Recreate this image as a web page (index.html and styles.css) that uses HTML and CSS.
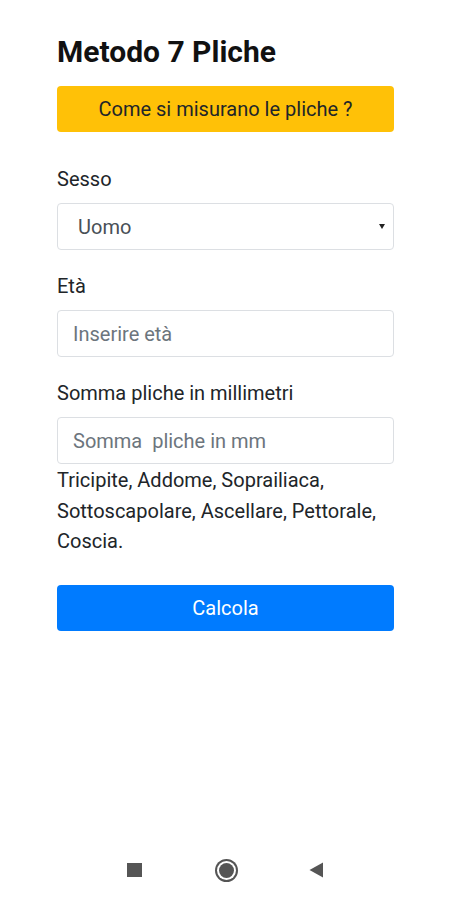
FILE: index.html
```html
<!DOCTYPE html>
<html lang="it">
  <head>
    <meta charset="UTF-8" />
    <meta name="viewport" content="width=device-width, initial-scale=1.0" />
    <title>Metodo 7 Pliche</title>
    <link rel="stylesheet" href="styles.css">
  </head>
  <body>
    <div class="screen">
      <div class="container">
        <h1 class="title">Metodo 7 Pliche</h1>
        <button class="btn btn-warning">Come si misurano le pliche ?</button>

        <div class="group">
          <label class="label" for="sesso">Sesso</label>
          <div class="select-wrap">
            <select class="field select" id="sesso">
              <option>Uomo</option>
              <option>Donna</option>
            </select>
            <span class="caret"></span>
          </div>
        </div>

        <div class="group">
          <label class="label" for="eta">Età</label>
          <input class="field" id="eta" type="text" placeholder="Inserire età">
        </div>

        <div class="group">
          <label class="label" for="somma">Somma pliche in millimetri</label>
          <input class="field" id="somma" type="text" placeholder="Somma  pliche in mm">
          <p class="hint">Tricipite, Addome, Soprailiaca, Sottoscapolare, Ascellare, Pettorale, Coscia.</p>
        </div>

        <button class="btn btn-primary">Calcola</button>
      </div>

      <div class="navbar">
        <span class="nav-square"></span>
        <span class="nav-circle"></span>
        <svg class="nav-back" width="14" height="16" viewBox="0 0 14 16">
          <path d="M14 0.5 L0.5 8 L14 15.5 Z" fill="#555"/>
        </svg>
      </div>
    </div>
  </body>
</html>
```

FILE: styles.css
```css
body {
  margin: 0;
  font-family: Roboto, "Noto Sans", Arial, sans-serif;
  background: #fff;
  color: #212529;
}

.screen {
  height: 900px;
  display: flex;
  flex-direction: column;
}

.container {
  flex: 1;
  padding: 36px 56px 0 57px;
}

.title {
  margin: 0 0 18px;
  font-size: 30px;
  font-weight: 700;
  line-height: 32px;
  color: #111;
}

.btn {
  display: block;
  width: 100%;
  height: 46px;
  border: none;
  border-radius: 4px;
  font-family: inherit;
  font-size: 20px;
  cursor: pointer;
}

.btn-warning {
  background: #ffc107;
  color: #212529;
}

.btn-primary {
  margin-top: 28px;
  background: #007bff;
  color: #fff;
}

.group {
  margin-top: 35px;
}

.label {
  display: block;
  font-size: 20px;
  line-height: 24px;
  color: #212529;
  margin-bottom: 12px;
}

.field {
  display: block;
  box-sizing: border-box;
  width: 100%;
  height: 47px;
  padding: 0 15px;
  border: 1px solid #dcdfe3;
  border-radius: 4px;
  background: #fff;
  font-family: inherit;
  font-size: 20px;
  color: #495057;
}

.field::placeholder {
  color: #6c757d;
}

.select-wrap {
  position: relative;
}

.select {
  appearance: none;
  -webkit-appearance: none;
  padding-left: 20px;
}

.caret {
  position: absolute;
  right: 9px;
  top: 21px;
  border-left: 3px solid transparent;
  border-right: 3px solid transparent;
  border-top: 5px solid #222;
}

.group + .group {
  margin-top: 24px;
}

.hint {
  margin: 1px 0 0;
  font-size: 20px;
  line-height: 30.5px;
  color: #212529;
}

.navbar {
  height: 60px;
  display: flex;
  justify-content: center;
  align-items: center;
  gap: 77px;
}

.nav-square {
  width: 15px;
  height: 14px;
  background: #555;
}

.nav-circle {
  width: 15px;
  height: 15px;
  border-radius: 50%;
  background: #555;
  box-shadow: 0 0 0 2px #fff, 0 0 0 4px #555;
}

.nav-back {
  display: block;
  margin-left: -2px;
}
```
